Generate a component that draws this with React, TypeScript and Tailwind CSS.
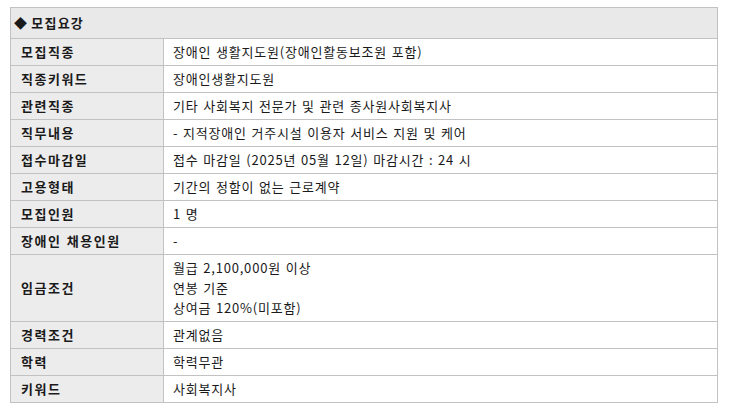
const rows: { label: string; value: string[] }[] = [
  { label: "모집직종", value: ["장애인 생활지도원(장애인활동보조원 포함)"] },
  { label: "직종키워드", value: ["장애인생활지도원"] },
  { label: "관련직종", value: ["기타 사회복지 전문가 및 관련 종사원사회복지사"] },
  { label: "직무내용", value: ["- 지적장애인 거주시설 이용자 서비스 지원 및 케어"] },
  { label: "접수마감일", value: ["접수 마감일 (2025년 05월 12일) 마감시간 : 24 시"] },
  { label: "고용형태", value: ["기간의 정함이 없는 근로계약"] },
  { label: "모집인원", value: ["1 명"] },
  { label: "장애인 채용인원", value: ["-"] },
  { label: "임금조건", value: ["월급 2,100,000원 이상", "연봉 기준", "상여금 120%(미포함)"] },
  { label: "경력조건", value: ["관계없음"] },
  { label: "학력", value: ["학력무관"] },
  { label: "키워드", value: ["사회복지사"] },
];

export default function App() {
  return (
    <div
      className="min-h-screen bg-white pl-[10px] pt-[7px] text-[13px] text-[#1a1a1a] [word-spacing:1px]"
      style={{ fontFamily: '"Noto Sans CJK KR", "Noto Sans", sans-serif' }}
    >
      <table className="w-[708px] border-collapse border border-[#c2c2c2]">
        <thead>
          <tr>
            <th
              colSpan={2}
              className="h-[31px] border border-[#c2c2c2] bg-[#e9e9e9] pl-[3px] text-left align-middle font-bold tracking-[1.2px] [word-spacing:-1px]"
            >
              ◆ 모집요강
            </th>
          </tr>
        </thead>
        <tbody>
          {rows.map((r) => (
            <tr key={r.label}>
              <th className="w-[153px] border border-[#c2c2c2] bg-[#ececec] pl-[10px] text-left align-middle font-bold tracking-[1.5px]">
                {r.label}
              </th>
              <td className="border border-[#c2c2c2] bg-white py-[3px] pl-[9px] align-middle leading-[20px] tracking-[0.8px]">
                {r.value.map((v) => (
                  <div key={v}>{v}</div>
                ))}
              </td>
            </tr>
          ))}
        </tbody>
      </table>
    </div>
  );
}
